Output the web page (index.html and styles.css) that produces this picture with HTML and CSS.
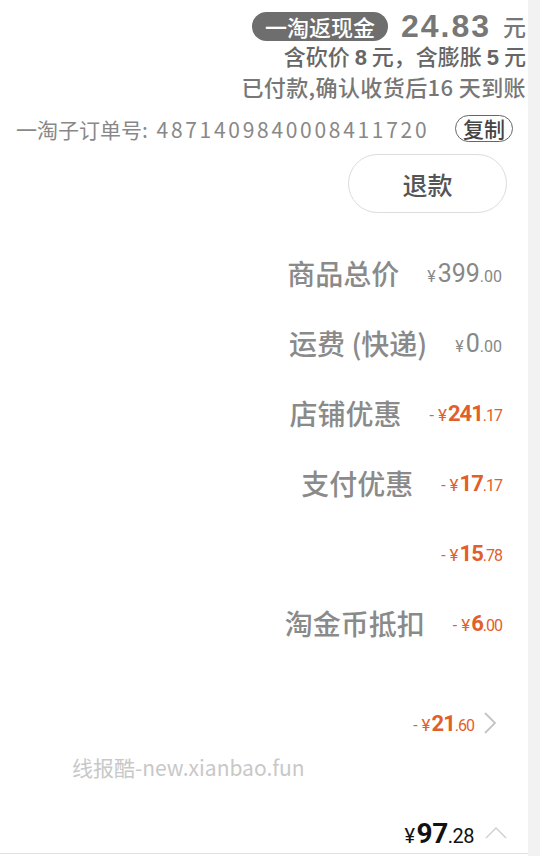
FILE: index.html
```html
<!DOCTYPE html>
<html lang="zh-CN">
<head>
  <meta charset="UTF-8" />
  <meta name="viewport" content="width=device-width, initial-scale=1.0"/>
  <title>订单详情</title>
  <link rel="stylesheet" href="styles.css">
</head>
<body>
  <div class="pagina">
    <div class="contenido">
      <div class="fanxian">
        <div class="fanxian-linea">
          <span class="insignia">一淘返现金</span>
          <span class="monto">24.83</span>
          <span class="yuan">元</span>
        </div>
        <div class="fanxian-detalle">含砍价 <b>8</b> 元，含膨胀 <b>5</b> 元</div>
        <div class="fanxian-estado">已付款,确认收货后16 天到账</div>
      </div>

      <div class="pedido">
        <span class="pedido-num">一淘子订单号: <span class="digitos">4871409840008411720</span></span>
        <span class="copiar">复制</span>
      </div>

      <div class="acciones">
        <button class="btn-reembolso">退款</button>
      </div>

      <div class="resumen">
        <div class="fila">
          <span class="etiqueta">商品总价</span>
          <span class="precio gris"><small class="moneda">¥</small>399<small>.00</small></span>
        </div>
        <div class="fila">
          <span class="etiqueta">运费 (快递)</span>
          <span class="precio gris"><small class="moneda">¥</small>0<small>.00</small></span>
        </div>
        <div class="fila">
          <span class="etiqueta">店铺优惠</span>
          <span class="precio naranja"><small class="signo">-</small><small class="moneda">¥</small>241<small>.17</small></span>
        </div>
        <div class="fila">
          <span class="etiqueta">支付优惠</span>
          <span class="precio naranja"><small class="signo">-</small><small class="moneda">¥</small>17<small>.17</small></span>
        </div>
        <div class="fila">
          <span class="precio naranja"><small class="signo">-</small><small class="moneda">¥</small>15<small>.78</small></span>
        </div>
        <div class="fila">
          <span class="etiqueta">淘金币抵扣</span>
          <span class="precio naranja"><small class="signo">-</small><small class="moneda">¥</small>6<small>.00</small></span>
        </div>
        <div class="fila fila-extra">
          <span class="precio naranja"><small class="signo">-</small><small class="moneda">¥</small>21<small>.60</small></span>
          <svg class="flecha" width="14" height="24" viewBox="0 0 14 24">
            <polyline points="2,2 12,12 2,22" fill="none" stroke="#c4c4c4" stroke-width="1.8"/>
          </svg>
        </div>
        <div class="fila fila-total">
          <span class="precio negro"><small class="moneda">¥</small>97<small>.28</small></span>
          <svg class="flecha-arriba" width="22" height="12" viewBox="0 0 22 12">
            <polyline points="1,11 11,1 21,11" fill="none" stroke="#cfcfcf" stroke-width="1.4"/>
          </svg>
        </div>
        <div class="marca-agua">线报酷-new.xianbao.fun</div>
      </div>
    </div>
    <div class="lateral"></div>
  </div>
</body>
</html>
```

FILE: styles.css
```css
body {
  margin: 0;
  padding: 0;
  font-family: "Noto Sans CJK SC", "Noto Sans", sans-serif;
  background-color: #ffffff;
  color: #777;
}

.pagina {
  display: flex;
  min-height: 856px;
}

.contenido {
  width: 528px;
}

.lateral {
  width: 12px;
  background-color: #f2f2f2;
}

/* bloque de cashback */
.fanxian {
  text-align: right;
  padding: 11px 2px 0 0;
  font-weight: 500;
}

.fanxian-linea {
  display: flex;
  justify-content: flex-end;
  align-items: center;
  height: 30px;
}

.insignia {
  background-color: #6e6e6e;
  color: #ffffff;
  font-size: 22px;
  line-height: 29px;
  padding: 0 13px;
  border-radius: 15px;
}

.monto {
  font-family: "Liberation Sans", Arial, sans-serif;
  font-weight: bold;
  font-size: 32px;
  line-height: 30px;
  letter-spacing: 2px;
  color: #777;
  margin-left: 13px;
}

.yuan {
  font-size: 23px;
  line-height: 30px;
  color: #777;
  margin-left: 12px;
}

.fanxian-detalle {
  font-size: 22px;
  line-height: 28px;
  color: #666;
}

.fanxian-detalle b {
  font-family: "Liberation Sans", Arial, sans-serif;
}

.fanxian-estado {
  font-size: 22px;
  line-height: 29px;
  letter-spacing: 0.4px;
  color: #777;
}

/* numero de pedido */
.pedido {
  display: flex;
  justify-content: space-between;
  align-items: center;
  padding: 0 15px 0 16px;
  margin-top: 13px;
  height: 29px;
}

.pedido-num {
  font-size: 21px;
  color: #888;
}

.digitos {
  margin-left: 4px;
  letter-spacing: 2.7px;
}

.copiar {
  font-size: 21px;
  line-height: 25px;
  font-weight: 500;
  color: #444;
  border: 1.5px solid #666;
  border-radius: 14px;
  padding: 0 7px;
}

.acciones {
  display: flex;
  justify-content: flex-end;
  padding-right: 21px;
  margin-top: 11px;
}

.btn-reembolso {
  width: 159px;
  height: 59px;
  background-color: #ffffff;
  border: 1px solid #dcdcdc;
  border-radius: 30px;
  font-family: inherit;
  font-weight: 500;
  font-size: 25px;
  color: #555;
  cursor: pointer;
}

/* resumen de precios */
.resumen {
  position: relative;
  margin-top: 25px;
}

.fila {
  display: flex;
  justify-content: flex-end;
  align-items: center;
  gap: 28px;
  height: 70px;
  padding-right: 26px;
}

.etiqueta {
  font-size: 28px;
  font-weight: 500;
  color: #8a8a8a;
}

.precio {
  font-family: "Roboto", sans-serif;
  font-size: 25px;
}

.precio small {
  font-size: 16px;
  font-weight: normal;
}

.precio .moneda {
  margin-right: 2px;
}

.precio .signo {
  margin-right: 5px;
}

.gris {
  color: #888;
}

.naranja {
  color: #e15f2b;
  font-weight: bold;
  font-size: 22px;
  letter-spacing: -1px;
}

.naranja .moneda {
  font-size: 17px;
}

.negro {
  color: #111;
  font-weight: bold;
  font-size: 28px;
  letter-spacing: -0.5px;
}

.negro small {
  font-size: 20px;
}

.fila-extra {
  margin-top: 30px;
  gap: 9px;
  padding-right: 31px;
}

.fila-total {
  height: 40px;
  margin-top: 55px;
  gap: 11px;
  padding-right: 21px;
  border-bottom: 1px solid #e2e2e2;
}

.marca-agua {
  position: absolute;
  left: 72px;
  top: 514px;
  font-size: 21px;
  color: #c8c8c8;
}
```
